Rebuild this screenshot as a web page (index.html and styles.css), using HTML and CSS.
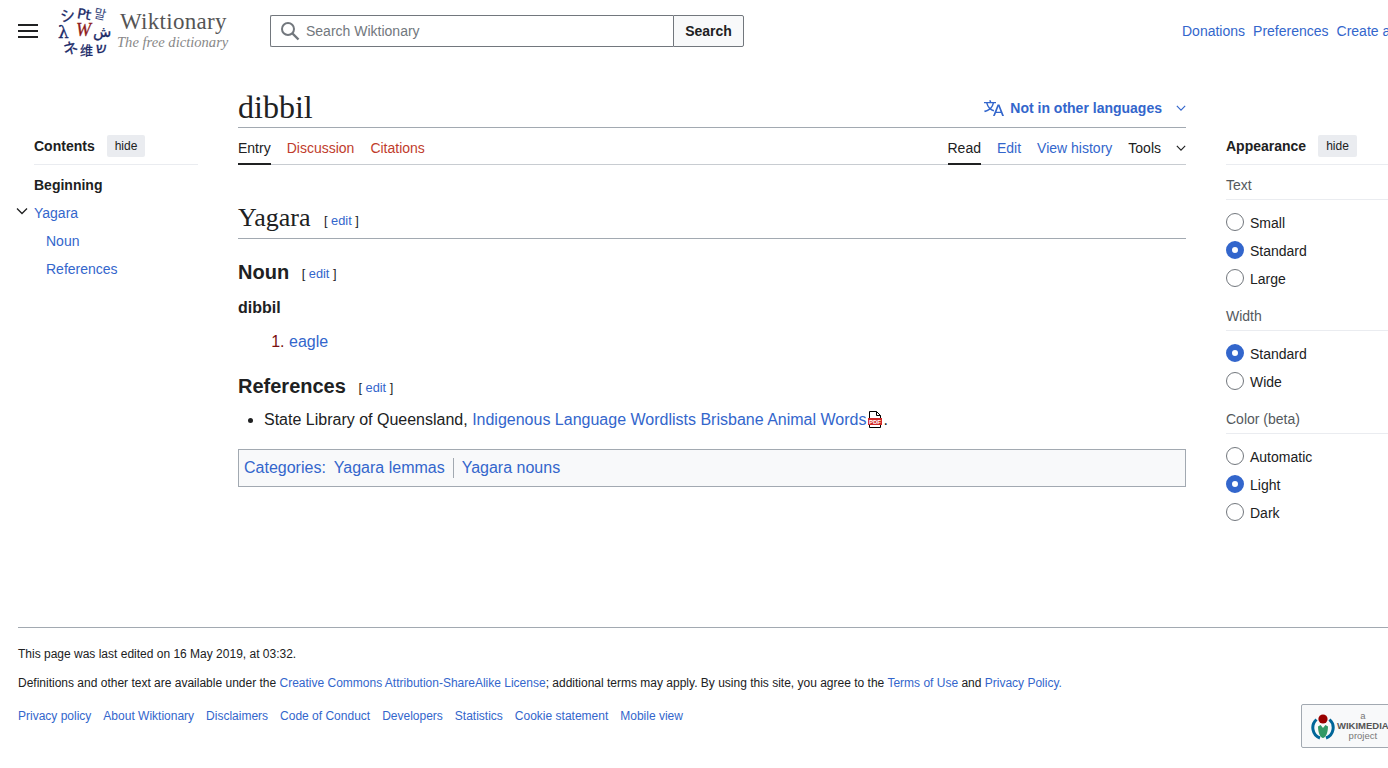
FILE: index.html
```html
<!DOCTYPE html>
<html lang="en">
<head>
    <meta charset="UTF-8">
    <meta name="viewport" content="width=device-width, initial-scale=1.0">
    <title>dibbil - Wiktionary</title>
    <link rel="stylesheet" href="styles.css">
</head>
<body>
    <header class="site-header">
        <button class="menu-button" aria-label="Main menu"><span></span><span></span><span></span></button>
        <a class="logo" href="#">
            <svg class="logo-mark" width="52" height="52" viewBox="0 0 52 52">
                <g fill="#1b2a68" stroke="#1b2a68" stroke-width="0.3" font-family="'Noto Sans CJK JP', 'DejaVu Sans', sans-serif">
                    <text x="3" y="16" font-size="15" transform="rotate(-8 10 10)">シ</text>
                    <text x="20" y="14" font-size="14" font-family="'DejaVu Sans', sans-serif" transform="rotate(10 26 10)">Pt</text>
                    <text x="37" y="14" font-size="13" fill="#3a4a80" stroke="none" transform="rotate(12 44 10)">말</text>
                    <text x="1" y="33" font-size="17" font-family="'DejaVu Serif', serif">λ</text>
                    <text x="19" y="31" font-size="18" font-family="'Liberation Serif', serif" font-style="italic" fill="#8e1c20" stroke="#8e1c20">W</text>
                    <text x="36" y="32" font-size="15" font-family="'DejaVu Sans', sans-serif">ش</text>
                    <text x="6" y="49" font-size="15" transform="rotate(-14 12 44)">ネ</text>
                    <text x="23" y="50" font-size="13">维</text>
                    <text x="39" y="48" font-size="15" font-family="'DejaVu Sans', sans-serif">ש</text>
                </g>
            </svg>
            <span class="logo-text">
                <span class="logo-name">Wiktionary</span>
                <span class="logo-tagline">The free dictionary</span>
            </span>
        </a>
        <form class="search-box">
            <span class="search-field">
                <svg width="20" height="20" viewBox="0 0 20 20"><circle cx="8" cy="8" r="6" fill="none" stroke="#72777d" stroke-width="2"/><path d="M12.5 12.5l6 6" stroke="#72777d" stroke-width="2.4"/></svg>
                <input type="text" placeholder="Search Wiktionary">
            </span>
            <button type="button" class="search-button">Search</button>
        </form>
        <nav class="user-links">
            <a href="#">Donations</a>
            <a href="#">Preferences</a>
            <a href="#">Create account</a>
        </nav>
    </header>

    <div class="page">
        <aside class="toc">
            <div class="panel-head">
                <strong>Contents</strong>
                <button class="hide-button">hide</button>
            </div>
            <ul class="toc-list">
                <li class="toc-begin">Beginning</li>
                <li class="toc-parent">
                    <svg class="toc-arrow" width="12" height="12" viewBox="0 0 12 12"><path d="M1 3.5l5 5 5-5" fill="none" stroke="#202122" stroke-width="1.3"/></svg>
                    <a href="#">Yagara</a>
                </li>
                <li class="toc-child"><a href="#">Noun</a></li>
                <li class="toc-child"><a href="#">References</a></li>
            </ul>
        </aside>

        <main class="content">
            <div class="title-row">
                <h1>dibbil</h1>
                <a class="lang-button" href="#">
                    <svg width="20" height="20" viewBox="0 0 20 20"><path fill="#36c" d="M20 18h-1.44a.6.6 0 0 1-.4-.12.8.8 0 0 1-.23-.31L17 15h-5l-1 2.54a.8.8 0 0 1-.22.3.6.6 0 0 1-.4.14H9l4.55-11.47h1.89zm-3.53-4.31L14.89 9.5a12 12 0 0 1-.39-1.24q-.09.37-.19.69l-.19.56-1.58 4.19zm-6.3-1.58a13.4 13.4 0 0 1-2.91-1.41 11.46 11.46 0 0 0 2.81-5.37H12V4H7.31a4 4 0 0 0-.2-.56C6.87 2.79 6.6 2 6.6 2l-1.47.5s.4.89.6 1.5H0v1.33h2.15A11.23 11.23 0 0 0 5 10.7a17.2 17.2 0 0 1-5 2.1q.56.82.87 1.38a23.3 23.3 0 0 0 5.22-2.51 15.6 15.6 0 0 0 3.56 1.77zM3.63 5.33h4.91a8.1 8.1 0 0 1-2.45 4.45 9.1 9.1 0 0 1-2.46-4.45"/></svg>
                    <span>Not in other languages</span>
                    <svg class="chevron" width="10" height="10" viewBox="0 0 12 12"><path d="M1 3.5l5 5 5-5" fill="none" stroke="#36c" stroke-width="1.4"/></svg>
                </a>
            </div>

            <div class="tabs">
                <div class="tab-group">
                    <a class="tab active" href="#">Entry</a>
                    <a class="tab missing" href="#">Discussion</a>
                    <a class="tab missing" href="#">Citations</a>
                </div>
                <div class="tab-group">
                    <a class="tab active" href="#">Read</a>
                    <a class="tab" href="#">Edit</a>
                    <a class="tab" href="#">View history</a>
                    <a class="tab tools" href="#">Tools<svg width="10" height="10" viewBox="0 0 12 12"><path d="M1 3.5l5 5 5-5" fill="none" stroke="#202122" stroke-width="1.4"/></svg></a>
                </div>
            </div>

            <h2 class="lang-heading">Yagara <span class="edit-link">[ <a href="#">edit</a> ]</span></h2>
            <h3 class="noun-heading">Noun <span class="edit-link">[ <a href="#">edit</a> ]</span></h3>
            <p class="headword">dibbil</p>
            <ol class="defs"><li><a href="#">eagle</a></li></ol>
            <h3 class="refs-heading">References <span class="edit-link">[ <a href="#">edit</a> ]</span></h3>
            <ul class="refs">
                <li>State Library of Queensland, <a href="#">Indigenous Language Wordlists Brisbane Animal Words</a><svg class="pdf-icon" width="16" height="17" viewBox="0 0 16 17"><path d="M2.5.5h7l4 4v12h-11z" fill="#fff" stroke="#000"/><path d="M9.5.5v4h4" fill="none" stroke="#000"/><rect x="1" y="7" width="14" height="7" fill="#d02a2a"/><text x="8" y="13" text-anchor="middle" font-family="'Liberation Sans', sans-serif" font-size="6" font-weight="700" fill="#fff">PDF</text></svg>.</li>
            </ul>
            <div class="categories">
                <span><a href="#">Categories</a><a href="#">:</a></span>
                <a class="cat first" href="#">Yagara lemmas</a>
                <a class="cat" href="#">Yagara nouns</a>
            </div>
        </main>

        <aside class="appearance">
            <div class="panel-head">
                <strong>Appearance</strong>
                <button class="hide-button">hide</button>
            </div>
            <form class="appearance-form">
                <div class="option-title">Text</div>
                <div class="options">
                    <label><input type="radio" name="text-size"> Small</label>
                    <label><input type="radio" name="text-size" checked> Standard</label>
                    <label><input type="radio" name="text-size"> Large</label>
                </div>
                <div class="option-title">Width</div>
                <div class="options">
                    <label><input type="radio" name="width" checked> Standard</label>
                    <label><input type="radio" name="width"> Wide</label>
                </div>
                <div class="option-title">Color (beta)</div>
                <div class="options">
                    <label><input type="radio" name="color"> Automatic</label>
                    <label><input type="radio" name="color" checked> Light</label>
                    <label><input type="radio" name="color"> Dark</label>
                </div>
            </form>
        </aside>
    </div>

    <footer class="site-footer">
        <p>This page was last edited on 16 May 2019, at 03:32.</p>
        <p>Definitions and other text are available under the <a href="#">Creative Commons Attribution-ShareAlike License</a>; additional terms may apply. By using this site, you agree to the <a href="#">Terms of Use</a> and <a href="#">Privacy Policy.</a></p>
        <div class="footer-bottom">
            <ul class="footer-links">
                <li><a href="#">Privacy policy</a></li>
                <li><a href="#">About Wiktionary</a></li>
                <li><a href="#">Disclaimers</a></li>
                <li><a href="#">Code of Conduct</a></li>
                <li><a href="#">Developers</a></li>
                <li><a href="#">Statistics</a></li>
                <li><a href="#">Cookie statement</a></li>
                <li><a href="#">Mobile view</a></li>
            </ul>
            <a class="wikimedia-badge" href="#">
                <svg width="24" height="27" viewBox="0 0 24 27">
                    <circle cx="12" cy="6" r="4.6" fill="#990000"/>
                    <path d="M12 25c-2.500 0-5-5-5-11.500l2.600-1.400L12 15l2.400-2.900 2.600 1.400C17 20 14.500 25 12 25z" fill="#339966"/>
                    <path d="M5.500 6.500A11 11 0 0 0 9 25M18.500 6.500A11 11 0 0 1 15 25" fill="none" stroke="#006699" stroke-width="3"/>
                </svg>
                <span class="badge-text"><small>a</small><b>WIKIMEDIA</b><small>project</small></span>
            </a>
        </div>
    </footer>
</body>
</html>
```
FILE: styles.css
```css
html, body {
    margin: 0;
    overflow-x: hidden;
}
body {
    font-family: "Liberation Sans", Arial, sans-serif;
    font-size: 14px;
    color: #202122;
    background: #fff;
    width: 1388px;
    overflow: hidden;
}
a {
    color: #36c;
    text-decoration: none;
}
ul, ol {
    margin: 0;
    padding: 0;
}

/* header */
.site-header {
    display: flex;
    align-items: center;
    height: 62px;
    padding-left: 18px;
    white-space: nowrap;
}
.menu-button {
    display: flex;
    flex-direction: column;
    gap: 4px;
    width: 20px;
    padding: 0;
    border: none;
    background: none;
}
.menu-button span {
    display: block;
    height: 2px;
    width: 20px;
    background: #202122;
}
.logo {
    display: flex;
    align-items: center;
    margin-left: 19px;
    width: 213px;
    flex: none;
}
.logo-mark {
    overflow: visible;
}
.logo-text {
    display: flex;
    flex-direction: column;
    margin-left: 11px;
    font-family: "Liberation Serif", serif;
    margin-top: -2px;
}
.logo-name {
    font-size: 23px;
    line-height: 24px;
    color: #555;
    letter-spacing: 0.3px;
}
.logo-tagline {
    font-size: 14.6px;
    line-height: 17px;
    font-style: italic;
    color: #888;
    margin-left: -3px;
}
.search-box {
    display: flex;
    flex: none;
    width: 474px;
    height: 32px;
    margin-top: -1px;
}
.search-field {
    flex: 1;
    display: flex;
    align-items: center;
    gap: 6px;
    padding-left: 9px;
    border: 1px solid #72777d;
    border-right: none;
    border-radius: 2px 0 0 2px;
}
.search-field input {
    flex: 1;
    border: none;
    outline: none;
    padding: 0;
    font: 14px "Liberation Sans", Arial, sans-serif;
}
.search-field input::placeholder {
    color: #72777d;
}
.search-button {
    width: 71px;
    background: #f8f9fa;
    border: 1px solid #72777d;
    border-radius: 0 2px 2px 0;
    font: bold 14px "Liberation Sans", Arial, sans-serif;
    color: #202122;
}
.user-links {
    display: flex;
    flex: none;
    gap: 8px;
    margin-left: 438px;
    margin-top: -1px;
}

/* three columns */
.page {
    display: grid;
    grid-template-columns: 164px 948px 180px;
    column-gap: 40px;
    padding-left: 34px;
    min-height: 565px;
    align-items: start;
}
.panel-head {
    display: flex;
    align-items: center;
    gap: 12px;
    height: 34px;
    padding-bottom: 1px;
    border-bottom: 1px solid #eaecf0;
    margin-top: 67px;
}
.hide-button {
    height: 22px;
    padding: 0 8px;
    border: none;
    border-radius: 2px;
    background: #eaecf0;
    font: 12px "Liberation Sans", Arial, sans-serif;
    color: #202122;
}

/* contents */
.toc-list {
    list-style: none;
    margin-top: 6px;
}
.toc-list li {
    height: 28px;
    line-height: 28px;
    position: relative;
}
.toc-begin {
    font-weight: bold;
}
.toc-arrow {
    position: absolute;
    left: -18px;
    top: 6px;
}
.toc-child {
    padding-left: 12px;
}

/* article */
.title-row {
    display: flex;
    justify-content: space-between;
    align-items: center;
    height: 65px;
    border-bottom: 1px solid #a2a9b1;
}
.title-row h1 {
    margin: 24px 0 0;
    font: normal 32px/40px "Liberation Serif", serif;
    color: #202122;
}
.lang-button {
    display: flex;
    align-items: center;
    gap: 6px;
    margin-top: 27px;
    font-weight: bold;
}
.lang-button .chevron {
    margin-left: 8px;
}
.tabs {
    display: flex;
    justify-content: space-between;
    height: 36px;
    border-bottom: 1px solid #c8ccd1;
}
.tab-group {
    display: flex;
    gap: 16px;
}
.tab {
    line-height: 40px;
    height: 37px;
    box-sizing: border-box;
}
.tab.active {
    color: #202122;
    border-bottom: 2px solid #202122;
}
.tab.missing {
    color: #bf3c2c;
}
.tab.tools {
    color: #202122;
}
.tab.tools svg {
    margin-left: 15px;
}
.lang-heading {
    margin: 37px 0 0;
    height: 36px;
    font: normal 26px/32px "Liberation Serif", serif;
    border-bottom: 1px solid #a2a9b1;
}
.noun-heading, .refs-heading {
    font-size: 20px;
    line-height: 26px;
    font-weight: bold;
    margin: 0;
}
.noun-heading {
    margin-top: 20px;
}
.edit-link {
    font-size: 12.8px;
    font-weight: normal;
    font-family: "Liberation Sans", Arial, sans-serif;
    margin-left: 7px;
    vertical-align: 1px;
}
.headword {
    margin: 9px 0 0;
    font-size: 16px;
    line-height: 24px;
    font-weight: bold;
}
.defs {
    margin: 10px 0 0 51px;
    font-size: 16px;
    line-height: 24px;
    color: #202122;
}
.defs li::marker {
    color: #7a1010;
}
.refs-heading {
    margin-top: 19px;
}
.refs {
    list-style: disc;
    margin: 6px 0 0 26px;
    font-size: 16px;
    line-height: 26px;
}
.pdf-icon {
    vertical-align: -3px;
    margin-left: 1px;
}
.categories {
    display: flex;
    align-items: center;
    height: 36px;
    margin-top: 16px;
    padding-left: 5px;
    border: 1px solid #a2a9b1;
    background: #f8f9fa;
    font-size: 16px;
    line-height: 20px;
    white-space: nowrap;
}
.cat {
    padding: 0 8px;
}
.cat.first {
    border-right: 1px solid #a2a9b1;
}

/* appearance */
.appearance-form {
    padding-top: 6px;
}
.option-title {
    height: 28px;
    line-height: 28px;
    color: #54595d;
    border-bottom: 1px solid #eaecf0;
}
.options {
    display: flex;
    flex-direction: column;
    margin: 9px 0;
}
.options label {
    display: flex;
    align-items: center;
    gap: 6px;
    height: 28px;
}
.options input {
    appearance: none;
    width: 18px;
    height: 18px;
    margin: -2px 0 0;
    border: 1px solid #72777d;
    border-radius: 50%;
    background: #fff;
}
.options input:checked {
    border: 6px solid #36c;
}

/* footer */
.site-footer {
    margin-left: 18px;
    border-top: 1px solid #a2a9b1;
    font-size: 12px;
    line-height: 16px;
    padding-top: 18px;
}
.site-footer p {
    margin: 0 0 13px;
}
.footer-bottom {
    display: flex;
    justify-content: space-between;
    align-items: flex-start;
    padding-top: 4px;
}
.footer-links {
    display: flex;
    gap: 12px;
    list-style: none;
}
.wikimedia-badge {
    display: flex;
    align-items: center;
    gap: 2px;
    flex: none;
    width: 110px;
    height: 44px;
    box-sizing: border-box;
    margin: -4px -23px 0 0;
    padding-left: 9px;
    border: 1px solid #a2a9b1;
    border-radius: 2px;
    background: #f8f9fa;
}
.badge-text {
    display: flex;
    flex-direction: column;
    align-items: center;
    color: #555;
    line-height: 10px;
}
.badge-text small {
    font-size: 9.5px;
    color: #777;
}
.badge-text b {
    font-size: 9.5px;
}
```
